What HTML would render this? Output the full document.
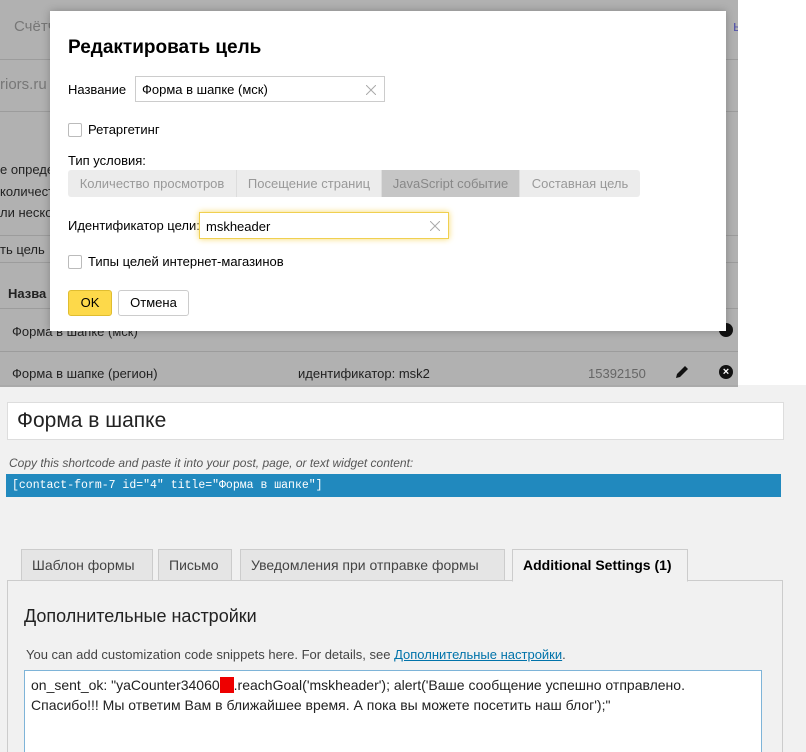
<html><head><style>
html,body{margin:0;width:806px;height:752px;overflow:hidden}
body{position:relative;font-family:"Liberation Sans",sans-serif;background:#f1f1f1}
.a{position:absolute}
.ov{left:0;top:0;width:738px;height:385px;background:#b1b1b1;overflow:hidden;color:#222;font-size:13px}
.ln{position:absolute;left:0;width:738px;height:1px;background:#9c9c9c}
.modal{left:50px;top:11px;width:676px;height:320px;background:#fff;box-shadow:0 0 8px rgba(0,0,0,.25);font-size:13px;color:#000}
.inp{position:absolute;border:1px solid #ccc;height:26px;line-height:26px;padding-left:6px;box-sizing:border-box;font-size:13px}
.x{position:absolute;right:8px;top:8px}
.cb{position:absolute;width:12px;height:12px;border:1px solid #bbb;border-radius:2px}
.seg{position:absolute;top:159px;height:27px;line-height:27px;background:#ececec;color:#999;font-size:13px;text-align:center;border-right:1px solid #ddd;box-sizing:border-box}
.tab{position:absolute;top:549px;height:32px;line-height:30px;background:#e5e5e5;border:1px solid #ccc;box-sizing:border-box;font-size:14px;color:#444;padding:0 10px}
</style></head><body>
<div class="a" style="left:738px;top:0;width:68px;height:385px;background:#fff"></div>
<div class="a ov">
<div class="ln" style="top:59px"></div><div class="ln" style="top:111px"></div><div class="ln" style="top:235px"></div><div class="ln" style="top:262px"></div><div class="ln" style="top:308px"></div><div class="ln" style="top:351px"></div>
<div class="a" style="left:14px;top:18px;font-size:15px;color:#777">Счётчики</div>
<div class="a" style="left:0;top:76px;font-size:15px;color:#777">riors.ru</div>
<div class="a" style="left:0;top:162px">е определ</div>
<div class="a" style="left:0;top:184px">количест</div>
<div class="a" style="left:0;top:205px">ли неско</div>
<div class="a" style="left:0;top:242px">ть цель</div>
<div class="a" style="left:8px;top:286px;font-weight:bold">Назва</div>
<div class="a" style="left:12px;top:324px">Форма в шапке (мск)</div>
<div class="a" style="left:12px;top:366px">Форма в шапке (регион)</div>
<div class="a" style="left:298px;top:366px">идентификатор: msk2</div>
<div class="a" style="left:588px;top:366px;color:#666">15392150</div>
<svg class="a" style="left:674px;top:364px" width="16" height="16" viewBox="0 0 16 16"><path d="M2 14l1-4 8-8 3 3-8 8z" fill="#111"/></svg>
<div class="a" style="left:719px;top:365px;width:14px;height:14px;border-radius:50%;background:#111;color:#fff;font-size:11px;line-height:14px;text-align:center;font-weight:bold">×</div>
<div class="a" style="left:719px;top:323px;width:14px;height:14px;border-radius:50%;background:#111"></div>
<div class="a" style="left:733px;top:18px;color:#55a;font-size:15px">ый</div>
</div>
<div class="a modal">
<div class="a" style="left:18px;top:26px;font-size:19px;font-weight:bold">Редактировать цель</div>
<div class="a" style="left:18px;top:71px">Название</div>
<div class="inp" style="left:85px;top:65px;width:250px">Форма в шапке (мск)<svg class="x" width="10" height="10"><path d="M0 0L10 10M10 0L0 10" stroke="#aaa"/></svg></div>
<div class="cb" style="left:18px;top:112px"></div><div class="a" style="left:38px;top:111px">Ретаргетинг</div>
<div class="a" style="left:18px;top:142px">Тип условия:</div>
<div class="seg" style="left:18px;width:169px;border-radius:3px 0 0 3px">Количество просмотров</div>
<div class="seg" style="left:187px;width:145px">Посещение страниц</div>
<div class="seg" style="left:332px;width:138px;background:#c6c6c6;color:#888">JavaScript событие</div>
<div class="seg" style="left:470px;width:120px;border-radius:0 3px 3px 0;border:0">Составная цель</div>
<div class="a" style="left:18px;top:207px">Идентификатор цели:</div>
<div class="inp" style="left:149px;top:201px;width:250px;height:27px;line-height:27px;border-color:#f0d050;box-shadow:0 0 6px #f7d96a">mskheader<svg class="x" width="10" height="10"><path d="M0 0L10 10M10 0L0 10" stroke="#aaa"/></svg></div>
<div class="cb" style="left:18px;top:244px"></div><div class="a" style="left:38px;top:243px">Типы целей интернет-магазинов</div>
<div class="a" style="left:18px;top:279px;width:44px;height:26px;background:#fdd94a;border:1px solid #e0bd30;border-radius:3px;box-sizing:border-box;text-align:center;line-height:24px">OK</div>
<div class="a" style="left:68px;top:279px;width:71px;height:26px;border:1px solid #ccc;border-radius:3px;box-sizing:border-box;text-align:center;line-height:24px">Отмена</div>
</div>
<div class="a" style="left:0;top:385px;width:738px;height:2px;background:#aaa"></div>
<div class="a" style="left:7px;top:402px;width:777px;height:38px;background:#fff;border:1px solid #ddd;box-sizing:border-box;font-size:21px;line-height:36px;padding-left:9px;color:#222">Форма в шапке</div>
<div class="a" style="left:9px;top:456px;font-size:12px;font-style:italic;color:#555">Copy this shortcode and paste it into your post, page, or text widget content:</div>
<div class="a" style="left:6px;top:474px;width:775px;height:23px;background:#2189be;color:#fff;font-family:'Liberation Mono',monospace;font-size:11.5px;line-height:23px;padding-left:6px;box-sizing:border-box">[contact-form-7 id="4" title="Форма в шапке"]</div>
<div class="a" style="left:7px;top:580px;width:776px;height:180px;border:1px solid #ccc;box-sizing:border-box;background:#f1f1f1"></div>
<div class="tab" style="left:21px;width:132px">Шаблон формы</div>
<div class="tab" style="left:158px;width:74px">Письмо</div>
<div class="tab" style="left:240px;width:265px">Уведомления при отправке формы</div>
<div class="tab" style="left:512px;width:176px;background:#f1f1f1;border-bottom-color:#f1f1f1;color:#000;font-weight:bold;height:33px">Additional Settings (1)</div>
<div class="a" style="left:24px;top:606px;font-size:18px;color:#222">Дополнительные настройки</div>
<div class="a" style="left:26px;top:647px;font-size:13px;color:#444">You can add customization code snippets here. For details, see <span style="color:#0073aa;text-decoration:underline">Дополнительные настройки</span>.</div>
<div class="a" style="left:24px;top:670px;width:738px;height:90px;background:#fff;border:1px solid #7eb4d8;box-sizing:border-box;font-size:14px;color:#222;padding:4px 6px;line-height:20px;white-space:nowrap">on_sent_ok: "yaCounter34060<span style="background:#e00;color:#e00">xx</span>.reachGoal('mskheader'); alert('Ваше сообщение успешно отправлено.<br>Спасибо!!! Мы ответим Вам в ближайшее время. А пока вы можете посетить наш блог');"</div>
</body></html>
